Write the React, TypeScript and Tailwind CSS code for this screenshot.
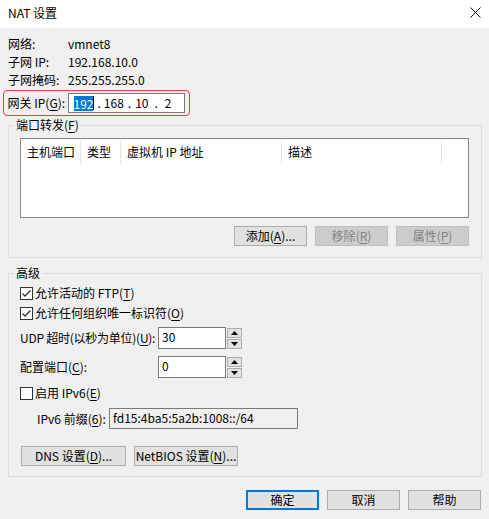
import React from "react";

const font = { fontFamily: '"Noto Sans CJK SC", "Noto Sans", sans-serif' };

function Key({ k }: { k: string }) {
  return (
    <>
      (<span className="underline underline-offset-2">{k}</span>)
    </>
  );
}

function Btn({
  children,
  disabled,
  primary,
  className = "",
}: {
  children: React.ReactNode;
  disabled?: boolean;
  primary?: boolean;
  className?: string;
}) {
  const look = disabled
    ? "bg-[#cccccc] border border-[#bfbfbf] text-[#838383]"
    : primary
      ? "bg-[#e1e1e1] border-2 border-[#0078d7] text-black"
      : "bg-[#e1e1e1] border border-[#adadad] text-black";
  return (
    <div className={`h-[20px] w-[73px] flex items-center justify-center whitespace-nowrap leading-none ${look} ${className}`}>
      {children}
    </div>
  );
}

function CheckBox({ checked }: { checked?: boolean }) {
  return (
    <div className="w-[13px] h-[13px] border border-[#333333] bg-white flex items-center justify-center shrink-0">
      {checked && (
        <svg width="11" height="11" viewBox="0 0 11 11">
          <polyline points="1.5,5.5 4,8 9.5,2.5" fill="none" stroke="#333333" strokeWidth="1.3" />
        </svg>
      )}
    </div>
  );
}

function Spinner() {
  const arrow = (up: boolean) => (
    <div className="h-[10px] w-[15px] bg-[#e1e1e1] border border-[#adadad] flex items-center justify-center">
      <svg width="7" height="4" viewBox="0 0 7 4">
        <polygon points={up ? "0,4 7,4 3.5,0" : "0,0 7,0 3.5,4"} fill="#000" />
      </svg>
    </div>
  );
  return (
    <div className="flex flex-col gap-[1px] ml-[1px]">
      {arrow(true)}
      {arrow(false)}
    </div>
  );
}

function Group({ label, className = "", children }: { label: React.ReactNode; className?: string; children: React.ReactNode }) {
  return (
    <div className={`relative ml-[8px] w-[474px] border border-[#dcdcdc] ${className}`}>
      <div className="absolute -top-[9px] left-[5px] px-[2px] bg-[#f0f0f0] leading-[16px] whitespace-nowrap">{label}</div>
      {children}
    </div>
  );
}

export default function App() {
  return (
    <div className="w-[489px] h-[519px] bg-[#f0f0f0] overflow-hidden text-[12px] text-black" style={font}>
      {/* title bar */}
      <div className="h-[28px] bg-white flex items-center justify-between pl-[8px] pr-[8px]">
        <span className="leading-none -mt-[2px]">NAT 设置</span>
        <svg width="11" height="11" viewBox="0 0 11 11" className="-mt-[4px]">
          <path d="M0.5 0.5 L10.5 10.5 M10.5 0.5 L0.5 10.5" stroke="#111" strokeWidth="1" />
        </svg>
      </div>

      {/* network info */}
      <div className="pt-[7px] pl-[8px]">
        {[
          ["网络:", "vmnet8"],
          ["子网 IP:", "192.168.10.0"],
          ["子网掩码:", "255.255.255.0"],
        ].map(([k, v]) => (
          <div key={k} className="h-[18px] flex items-center whitespace-nowrap">
            <span className="w-[60px]">{k}</span>
            <span>{v}</span>
          </div>
        ))}
      </div>

      <div className="mt-[1px] ml-[3px] w-[187px] h-[26px] border-[1.5px] border-[#ec3b3b] rounded-[4px] flex items-center pl-[3.5px] whitespace-nowrap">
        <span className="w-[60px]">
          网关 IP<Key k="G" />:
        </span>
        <div className="w-[117px] h-[20px] border border-[#7a7a7a] bg-white flex items-center pl-[5px]">
          <span className="w-[19px] text-center bg-[#0078d7] text-white leading-[15px]">192</span>
          <span className="w-[1px] h-[14px] bg-black" />
          <span className="ml-[4px]">.</span>
          <span className="ml-[3px]">168</span>
          <span className="ml-[4px]">.</span>
          <span className="ml-[4px]">10</span>
          <span className="ml-[6px]">.</span>
          <span className="ml-[7px]">2</span>
        </div>
      </div>

      {/* port forwarding */}
      <Group label={<>端口转发<Key k="F" /></>} className="mt-[9px] pt-[12px] pl-[11px] pr-[12px] pb-[11px]">
        <div className="h-[80px] border border-[#828790] bg-white">
          <div className="flex h-[25px] items-center whitespace-nowrap">
            {[
              ["主机端口", "w-[60px]"],
              ["类型", "w-[40px]"],
              ["虚拟机 IP 地址", "w-[161px]"],
              ["描述", "w-[160px]"],
            ].map(([t, w]) => (
              <div key={t} className={`${w} h-[23px] mt-[1px] border-r border-[#e5e5e5] flex items-center pl-[6px]`}>
                {t}
              </div>
            ))}
          </div>
        </div>
        <div className="mt-[8px] flex justify-end gap-[8px]">
          <Btn>
            添加<Key k="A" />...
          </Btn>
          <Btn disabled>
            移除<Key k="R" />
          </Btn>
          <Btn disabled>
            属性<Key k="P" />
          </Btn>
        </div>
      </Group>

      {/* advanced */}
      <Group label="高级" className="mt-[15px] pt-[9px] pl-[11px] pb-[10px] whitespace-nowrap">
        <div className="h-[20px] flex items-center gap-[2px]">
          <CheckBox checked />
          <span>
            允许活动的 FTP<Key k="T" />
          </span>
        </div>
        <div className="h-[20px] flex items-center gap-[2px]">
          <CheckBox checked />
          <span>
            允许任何组织唯一标识符<Key k="O" />
          </span>
        </div>
        <div className="mt-[4px] h-[22px] flex items-center">
          <span className="w-[138px] tracking-[-0.25px]">
            UDP 超时(以秒为单位)<Key k="U" />:
          </span>
          <div className="w-[68px] h-[22px] border border-[#7a7a7a] bg-white pl-[3px] leading-[18px]">30</div>
          <Spinner />
        </div>
        <div className="mt-[7px] h-[22px] flex items-center">
          <span className="w-[138px]">
            配置端口<Key k="C" />:
          </span>
          <div className="w-[68px] h-[22px] border border-[#7a7a7a] bg-white pl-[3px] leading-[18px]">0</div>
          <Spinner />
        </div>
        <div className="mt-[5px] h-[20px] flex items-center gap-[2px]">
          <CheckBox />
          <span>
            启用 IPv6<Key k="E" />
          </span>
        </div>
        <div className="mt-[5px] h-[21px] flex items-center pl-[17px]">
          <span className="w-[72px]">
            IPv6 前缀<Key k="6" />:
          </span>
          <div className="w-[189px] h-[21px] border border-[#7a7a7a] bg-[#f0f0f0] pl-[3px] leading-[17px]">
            fd15:4ba5:5a2b:1008::/64
          </div>
        </div>
        <div className="mt-[17px] flex gap-[8px] pl-[1px]">
          <Btn className="!w-[105px]">
            DNS 设置<Key k="D" />...
          </Btn>
          <Btn className="!w-[104px]">
            NetBIOS 设置<Key k="N" />...
          </Btn>
        </div>
      </Group>

      {/* footer */}
      <div className="mt-[13px] pr-[8px] flex justify-end gap-[8px]">
        <Btn primary>确定</Btn>
        <Btn>取消</Btn>
        <Btn>帮助</Btn>
      </div>
    </div>
  );
}
